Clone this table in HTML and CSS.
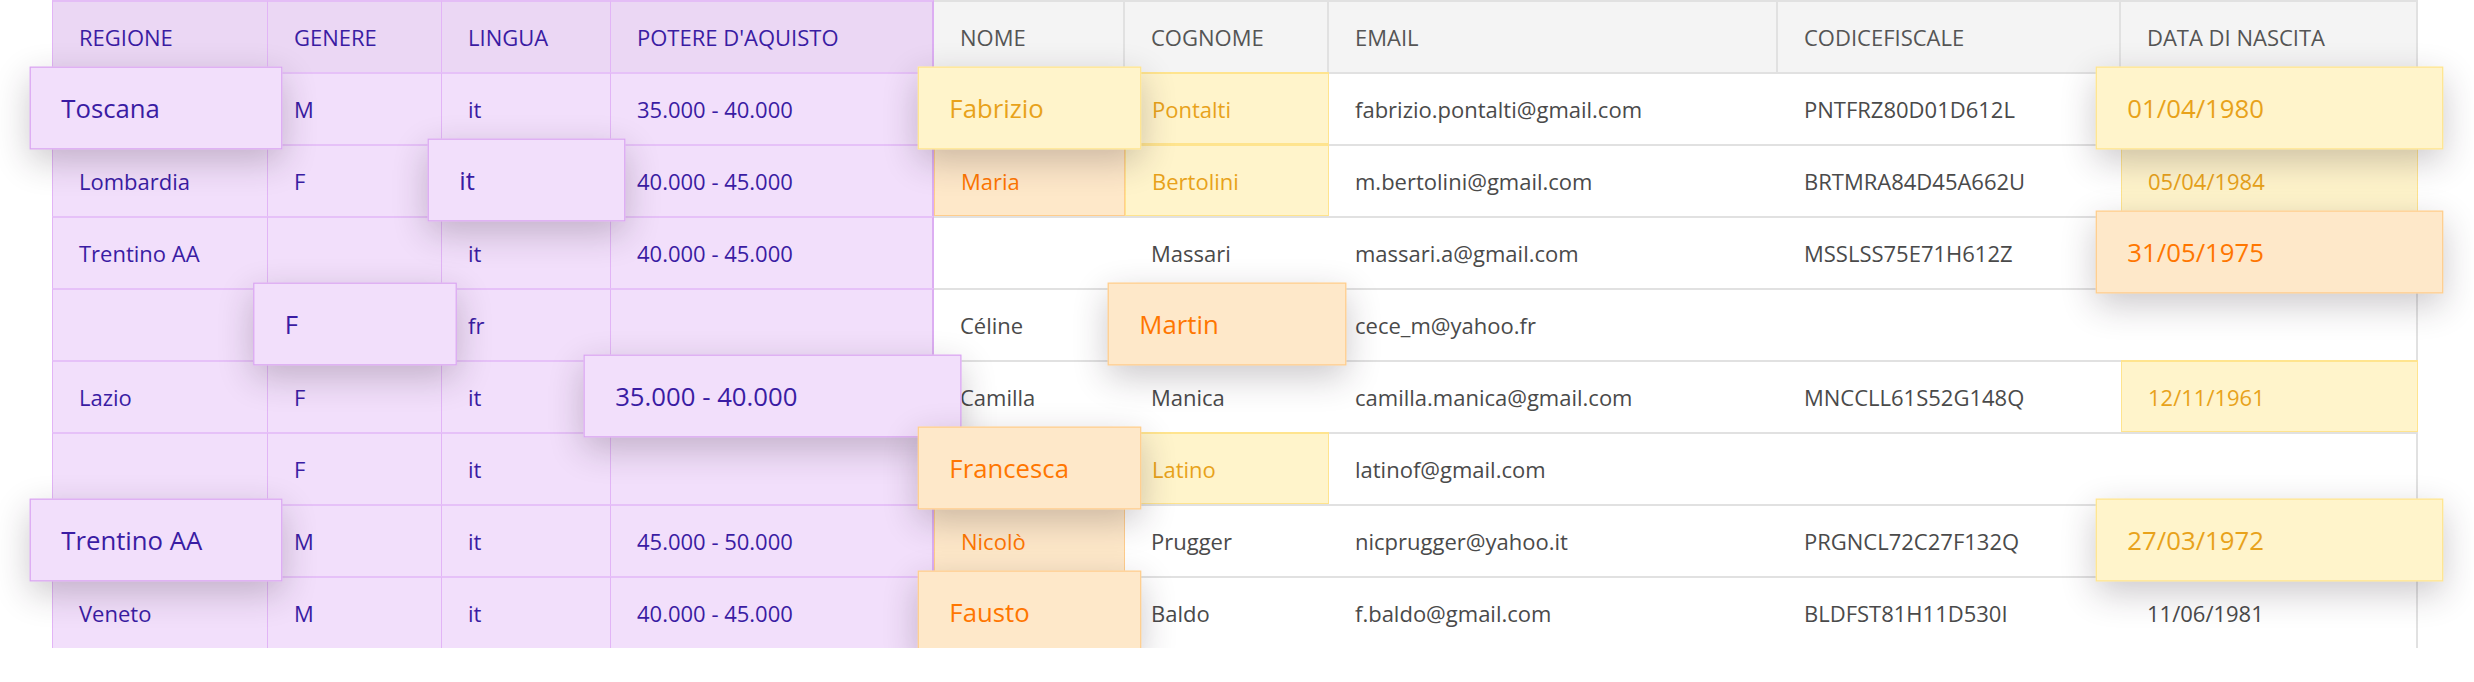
FILE: index.html
```html
<!DOCTYPE html>
<html lang="it">
<head>
<meta charset="utf-8">
<title>Tabella utenti</title>
<link rel="stylesheet" href="styles.css">
</head>
<body>
<div class="wrap">
  <div class="grid">
    <div class="c ph first">REGIONE</div>
    <div class="c ph">GENERE</div>
    <div class="c ph">LINGUA</div>
    <div class="c ph edge">POTERE D'AQUISTO</div>
    <div class="c h">NOME</div>
    <div class="c h">COGNOME</div>
    <div class="c h">EMAIL</div>
    <div class="c h">CODICEFISCALE</div>
    <div class="c h">DATA DI NASCITA</div>

    <div class="c p first card card-p shift">Toscana</div>
    <div class="c p">M</div>
    <div class="c p">it</div>
    <div class="c p edge">35.000 - 40.000</div>
    <div class="c card card-y">Fabrizio</div>
    <div class="c y">Pontalti</div>
    <div class="c">fabrizio.pontalti@gmail.com</div>
    <div class="c">PNTFRZ80D01D612L</div>
    <div class="c last card card-y">01/04/1980</div>

    <div class="c p first">Lombardia</div>
    <div class="c p">F</div>
    <div class="c p card card-p">it</div>
    <div class="c p edge">40.000 - 45.000</div>
    <div class="c o">Maria</div>
    <div class="c y">Bertolini</div>
    <div class="c">m.bertolini@gmail.com</div>
    <div class="c">BRTMRA84D45A662U</div>
    <div class="c last y">05/04/1984</div>

    <div class="c p first">Trentino AA</div>
    <div class="c p"></div>
    <div class="c p">it</div>
    <div class="c p edge">40.000 - 45.000</div>
    <div class="c"></div>
    <div class="c">Massari</div>
    <div class="c">massari.a@gmail.com</div>
    <div class="c">MSSLSS75E71H612Z</div>
    <div class="c last card card-o">31/05/1975</div>

    <div class="c p first"></div>
    <div class="c p card card-p">F</div>
    <div class="c p">fr</div>
    <div class="c p edge"></div>
    <div class="c">Céline</div>
    <div class="c card card-o">Martin</div>
    <div class="c">cece_m@yahoo.fr</div>
    <div class="c"></div>
    <div class="c last"></div>

    <div class="c p first">Lazio</div>
    <div class="c p">F</div>
    <div class="c p">it</div>
    <div class="c p edge card card-p">35.000 - 40.000</div>
    <div class="c">Camilla</div>
    <div class="c">Manica</div>
    <div class="c">camilla.manica@gmail.com</div>
    <div class="c">MNCCLL61S52G148Q</div>
    <div class="c last y">12/11/1961</div>

    <div class="c p first"></div>
    <div class="c p">F</div>
    <div class="c p">it</div>
    <div class="c p edge"></div>
    <div class="c card card-o">Francesca</div>
    <div class="c y">Latino</div>
    <div class="c">latinof@gmail.com</div>
    <div class="c"></div>
    <div class="c last"></div>

    <div class="c p first card card-p shift">Trentino AA</div>
    <div class="c p">M</div>
    <div class="c p">it</div>
    <div class="c p edge">45.000 - 50.000</div>
    <div class="c o">Nicolò</div>
    <div class="c">Prugger</div>
    <div class="c">nicprugger@yahoo.it</div>
    <div class="c">PRGNCL72C27F132Q</div>
    <div class="c last card card-y">27/03/1972</div>

    <div class="c p first">Veneto</div>
    <div class="c p">M</div>
    <div class="c p">it</div>
    <div class="c p edge">40.000 - 45.000</div>
    <div class="c card card-o">Fausto</div>
    <div class="c">Baldo</div>
    <div class="c">f.baldo@gmail.com</div>
    <div class="c">BLDFST81H11D530I</div>
    <div class="c last">11/06/1981</div>
  </div>
</div>
</body>
</html>
```

FILE: styles.css
```css
html, body {
  margin: 0;
  padding: 0;
  background: #ffffff;
}

body {
  font-family: "Open Sans", "Noto Sans", "DejaVu Sans", sans-serif;
  font-size: 22px;
  color: #4a4a4a;
}

.wrap {
  padding-left: 52px;
}

.grid {
  display: grid;
  grid-template-columns: 216px 174px 169px 323px 191px 204px 449px 343px 297px;
  grid-template-rows: 72px repeat(8, 72px);
  width: 2366px;
}

.c {
  box-sizing: border-box;
  display: flex;
  align-items: center;
  padding-left: 26px;
  border-top: 2px solid #e1e1e1;
  background: #ffffff;
  color: #4a4a4a;
  white-space: nowrap;
}

/* header (grey) */
.h {
  background: #f4f4f4;
  color: #555555;
  border-right: 2px solid #e1e1e1;
}

/* purple area */
.ph {
  background: #ebd7f4;
  color: #3a1ca3;
  border-top: 2px solid #e4bdf6;
  border-right: 1px solid #e2b4f6;
}

.p {
  background: #f2dffb;
  color: #3a1ca3;
  border-top: 2px solid #e6c1f8;
  border-right: 1px solid #e2b4f6;
}

.first {
  border-left: 1px solid #e2b4f6;
}

.edge {
  border-right: 2px solid #dcaef2;
}

.last {
  border-right: 2px solid #e1e1e1;
}

/* highlighted cells */
.y {
  background: #fff4cb;
  color: #e8a21a;
  border: 1px solid #ffe48e;
  border-top-width: 2px;
}

.o {
  background: #fee8c9;
  color: #ff7600;
  border: 1px solid #ffcd8c;
  border-top-width: 2px;
}

/* popped out cards */
.card {
  position: relative;
  z-index: 2;
  transform: scale(1.17, 1.15);
  box-shadow: 0 10px 30px rgba(40, 30, 40, 0.24);
  border-width: 1px;
  border-style: solid;
}

.card-p {
  background: #f2dffb;
  color: #3a1ca3;
  border-color: #d9a3f1;
}

.card-y {
  background: #fff4cb;
  color: #e8a21a;
  border-color: #ffe48e;
}

.card-o {
  background: #fee8c9;
  color: #ff7600;
  border-color: #ffcd8c;
}

.shift {
  transform: translateX(-4px) scale(1.17, 1.15);
}
```
